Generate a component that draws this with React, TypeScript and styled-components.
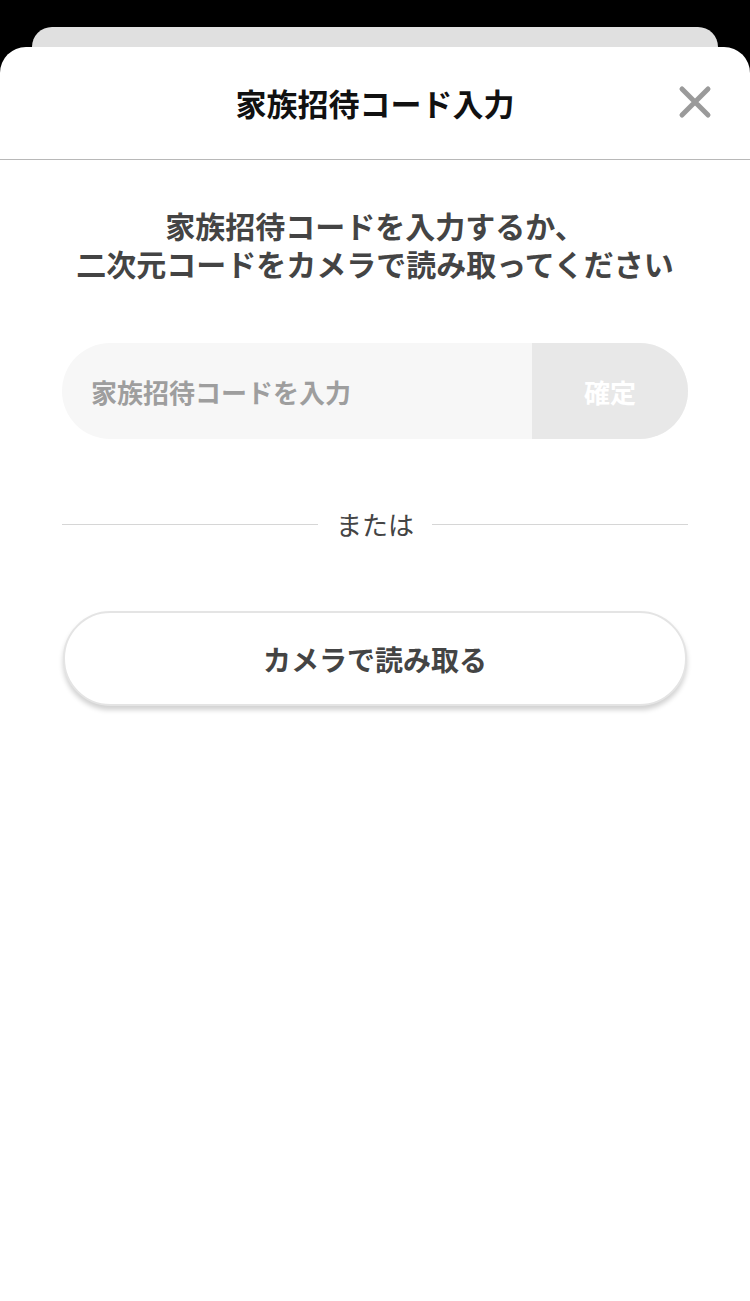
import styled, { createGlobalStyle } from "styled-components";

const GlobalStyle = createGlobalStyle`
  * { box-sizing: border-box; }
  html, body { margin: 0; padding: 0; background: #000; }
  body {
    font-family: "Noto Sans CJK JP", "Noto Sans", sans-serif;
  }
`;

function CloseIcon() {
  return (
    <svg width="34" height="34" viewBox="0 0 34 34" fill="none">
      <path
        d="M4 4 L30 30 M30 4 L4 30"
        stroke="#9a9a9a"
        strokeWidth="5"
        strokeLinecap="round"
      />
    </svg>
  );
}

export default function App() {
  return (
    <>
      <GlobalStyle />
      <Page>
        <BackCard />
        <Sheet>
          <Header>
            <Title>家族招待コード入力</Title>
            <CloseButton aria-label="閉じる">
              <CloseIcon />
            </CloseButton>
          </Header>
          <Body>
            <Message>
              家族招待コードを入力するか、
              <br />
              二次元コードをカメラで読み取ってください
            </Message>
            <CodeForm onSubmit={(e) => e.preventDefault()}>
              <CodeInput type="text" placeholder="家族招待コードを入力" />
              <ConfirmButton type="submit" disabled>
                確定
              </ConfirmButton>
            </CodeForm>
            <Divider>
              <Line />
              <DividerText>または</DividerText>
              <Line />
            </Divider>
            <CameraButton type="button">カメラで読み取る</CameraButton>
          </Body>
        </Sheet>
      </Page>
    </>
  );
}

const Page = styled.div`
  min-height: 100vh;
  padding-top: 27px;
  background: #000;
  display: flex;
  flex-direction: column;
`;

const BackCard = styled.div`
  height: 40px;
  margin: 0 32px;
  background: #e0e0e0;
  border-radius: 20px 20px 0 0;
`;

const Sheet = styled.div`
  position: relative;
  z-index: 1;
  margin-top: -20px;
  flex: 1;
  background: #fff;
  border-radius: 26px 26px 0 0;
  display: flex;
  flex-direction: column;
`;

const Header = styled.div`
  height: 113px;
  border-bottom: 1px solid #b8b8b8;
  display: flex;
  align-items: center;
  justify-content: center;
  position: relative;
`;

const Title = styled.h1`
  margin: 0;
  font-size: 31px;
  font-weight: 700;
  color: #111;
  line-height: 40px;
`;

const CloseButton = styled.button`
  position: absolute;
  right: 38px;
  top: 38px;
  width: 34px;
  height: 34px;
  padding: 0;
  border: none;
  background: none;
  display: flex;
  align-items: center;
  justify-content: center;
`;

const Body = styled.div`
  padding: 46px 62px 0;
  display: flex;
  flex-direction: column;
  align-items: stretch;
`;

const Message = styled.p`
  margin: 0;
  text-align: center;
  font-size: 30px;
  font-weight: 700;
  line-height: 38px;
  color: #444;
`;

const CodeForm = styled.form`
  margin-top: 61px;
  height: 96px;
  border-radius: 48px;
  overflow: hidden;
  display: flex;
  background: #f7f7f7;
`;

const CodeInput = styled.input`
  flex: 1;
  min-width: 0;
  border: none;
  outline: none;
  background: transparent;
  padding: 0 0 0 29px;
  font-family: inherit;
  font-size: 26px;
  font-weight: 700;
  color: #444;

  &::placeholder {
    color: #9e9e9e;
  }
`;

const ConfirmButton = styled.button`
  width: 156px;
  border: none;
  background: #e8e8e8;
  color: #fff;
  font-family: inherit;
  font-size: 26px;
  font-weight: 700;
  padding: 0;
`;

const Divider = styled.div`
  margin-top: 67px;
  height: 36px;
  display: flex;
  align-items: center;
  gap: 18px;
`;

const Line = styled.div`
  flex: 1;
  height: 1px;
  background: #d6d6d6;
`;

const DividerText = styled.span`
  font-size: 26px;
  font-weight: 400;
  color: #444;
  line-height: 36px;
`;

const CameraButton = styled.button`
  margin: 69px 1px 0;
  height: 95px;
  border-radius: 48px;
  border: 2px solid #e4e4e4;
  background: #fff;
  box-shadow: 0 4px 5px rgba(0, 0, 0, 0.18);
  font-family: inherit;
  font-size: 28px;
  font-weight: 700;
  color: #444;
`;
